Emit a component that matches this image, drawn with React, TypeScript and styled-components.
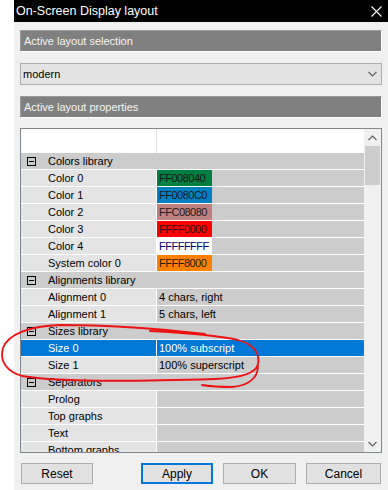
import React from 'react';
import styled, { createGlobalStyle } from 'styled-components';

const GlobalStyle = createGlobalStyle`
  html, body {
    margin: 0;
    padding: 0;
    background: #ffffff;
  }
  body {
    font-family: 'Liberation Sans', Arial, sans-serif;
  }
`;

const Page = styled.div`
  position: relative;
  display: flex;
  width: 388px;
  height: 490px;
  overflow: hidden;
`;

const Gutter = styled.div`
  width: 14px;
  flex-shrink: 0;
  background: #ffffff;
`;

const Dialog = styled.div`
  flex: 1;
  display: flex;
  flex-direction: column;
  background: #f0f0f0;
`;

const TitleBar = styled.div`
  height: 22px;
  background: #000000;
  color: #ffffff;
  display: flex;
  align-items: center;
  justify-content: space-between;
  padding: 0 6px 0 2px;
  font-size: 12.5px;
  flex-shrink: 0;
`;

const Body = styled.div`
  display: flex;
  flex-direction: column;
  padding: 8px 6px 0 6px;
`;

const SectionHeader = styled.div<{ $mt?: number }>`
  height: 20px;
  margin-top: ${(p) => p.$mt ?? 0}px;
  background: #808080;
  border: 1px solid;
  border-color: #9a9a9a #ffffff #ffffff #9a9a9a;
  color: #f4f4f4;
  font-size: 11px;
  display: flex;
  align-items: center;
  padding-left: 3px;
`;

const Combo = styled.div`
  height: 20px;
  margin-top: 11px;
  background: #e3e3e3;
  border: 1px solid #adadad;
  display: flex;
  align-items: center;
  justify-content: space-between;
  padding: 0 4px 0 2px;
  font-size: 11px;
  color: #000;
`;

const Grid = styled.div`
  margin-top: 10px;
  height: 323px;
  border: 1px solid #828790;
  background: #ffffff;
  display: flex;
  overflow: hidden;
`;

const GridMain = styled.div`
  flex: 1;
  display: flex;
  flex-direction: column;
  overflow: hidden;
`;

const HeaderRow = styled.div`
  height: 24px;
  flex-shrink: 0;
  display: grid;
  grid-template-columns: 136px 1fr;
`;

const HeaderCell = styled.div`
  border-right: 1px solid #e4e4e4;
`;

const Row = styled.div<{ $selected?: boolean }>`
  height: 16px;
  flex-shrink: 0;
  border-bottom: 1px solid #ffffff;
  display: grid;
  grid-template-columns: 136px 1fr;
  font-size: 11px;
  color: ${(p) => (p.$selected ? '#ffffff' : '#000000')};
  background: ${(p) => (p.$selected ? '#0078d7' : '#cccccc')};
`;

const Label = styled.div<{ $kind: 'cat' | 'item'; $selected?: boolean }>`
  display: flex;
  align-items: center;
  padding-left: ${(p) => (p.$kind === 'cat' ? 6 : 27)}px;
  background: ${(p) => (p.$selected ? '#0078d7' : p.$kind === 'cat' ? '#cccccc' : '#e4e4e4')};
  border-right: 1px solid ${(p) => (p.$kind === 'cat' ? 'transparent' : '#ffffff')};
  white-space: nowrap;
`;

const Value = styled.div`
  display: flex;
  align-items: center;
  white-space: nowrap;
`;

const Plain = styled.span`
  padding-left: 2px;
`;

const Swatch = styled.span<{ $bg: string; $fg?: string }>`
  width: 53px;
  height: 16px;
  overflow: hidden;
  background: ${(p) => p.$bg};
  color: ${(p) => p.$fg ?? '#1a1a1a'};
  display: flex;
  align-items: center;
  padding-left: 2px;
  letter-spacing: -0.5px;
`;

const Toggle = styled.span`
  width: 9px;
  height: 9px;
  box-sizing: border-box;
  border: 1px solid #000;
  margin-right: 12px;
  position: relative;
  &::after {
    content: '';
    position: absolute;
    left: 1px;
    right: 1px;
    top: 3px;
    height: 1px;
    background: #000;
  }
`;

const ScrollBar = styled.div`
  width: 17px;
  flex-shrink: 0;
  background: #f0f0f0;
  display: flex;
  flex-direction: column;
  align-items: center;
`;

const ScrollArrow = styled.div`
  height: 17px;
  width: 17px;
  display: flex;
  align-items: center;
  justify-content: center;
  flex-shrink: 0;
`;

const Thumb = styled.div`
  width: 15px;
  height: 39px;
  background: #cdcdcd;
`;

const Track = styled.div`
  flex: 1;
`;

const ButtonBar = styled.div`
  display: flex;
  margin-top: 10px;
  padding: 0 6px 0 7px;
`;

const Button = styled.div<{ $w: number; $focus?: boolean; $ml?: number }>`
  width: ${(p) => p.$w}px;
  height: 21px;
  box-sizing: border-box;
  margin-left: ${(p) => p.$ml ?? 0}px;
  background: #e1e1e1;
  border: ${(p) => (p.$focus ? '2px solid #0078d7' : '1px solid #adadad')};
  display: flex;
  align-items: center;
  justify-content: center;
  font-size: 12px;
  color: #000;
`;

const Annotation = styled.svg`
  position: absolute;
  left: 0;
  top: 0;
  pointer-events: none;
`;

type Item = {
  kind: 'cat' | 'item';
  label: string;
  value?: string;
  swatch?: string;
  fg?: string;
  selected?: boolean;
};

const rows: Item[] = [
  { kind: 'cat', label: 'Colors library' },
  { kind: 'item', label: 'Color 0', value: 'FF008040', swatch: '#008040' },
  { kind: 'item', label: 'Color 1', value: 'FF0080C0', swatch: '#0080c0' },
  { kind: 'item', label: 'Color 2', value: 'FFC08080', swatch: '#c08080' },
  { kind: 'item', label: 'Color 3', value: 'FFFF0000', swatch: '#ff0000' },
  { kind: 'item', label: 'Color 4', value: 'FFFFFFFF', swatch: '#ffffff', fg: '#000060' },
  { kind: 'item', label: 'System color 0', value: 'FFFF8000', swatch: '#ff8000' },
  { kind: 'cat', label: 'Alignments library' },
  { kind: 'item', label: 'Alignment 0', value: '4 chars, right' },
  { kind: 'item', label: 'Alignment 1', value: '5 chars, left' },
  { kind: 'cat', label: 'Sizes library' },
  { kind: 'item', label: 'Size 0', value: '100% subscript', selected: true },
  { kind: 'item', label: 'Size 1', value: '100% superscript' },
  { kind: 'cat', label: 'Separators' },
  { kind: 'item', label: 'Prolog' },
  { kind: 'item', label: 'Top graphs' },
  { kind: 'item', label: 'Text' },
  { kind: 'item', label: 'Bottom graphs' },
];

const Chevron: React.FC<{ up?: boolean; color?: string }> = ({ up, color = '#606060' }) => (
  <svg width="9" height="6" viewBox="0 0 9 6">
    <path
      d={up ? 'M0.5 5 L4.5 1 L8.5 5' : 'M0.5 1 L4.5 5 L8.5 1'}
      fill="none"
      stroke={color}
      strokeWidth="1.2"
    />
  </svg>
);

const PropertyRow: React.FC<{ item: Item }> = ({ item }) => (
  <Row $selected={item.selected}>
    <Label $kind={item.kind} $selected={item.selected}>
      {item.kind === 'cat' && <Toggle />}
      {item.label}
    </Label>
    <Value>
      {item.swatch ? (
        <Swatch $bg={item.swatch} $fg={item.fg}>
          {item.value}
        </Swatch>
      ) : (
        item.value && <Plain>{item.value}</Plain>
      )}
    </Value>
  </Row>
);

export default function App() {
  return (
    <>
      <GlobalStyle />
      <Page>
        <Gutter />
        <Dialog>
          <TitleBar>
            <span>On-Screen Display layout</span>
            <svg width="11" height="11" viewBox="0 0 11 11">
              <path d="M0.5 0.5 L10.5 10.5 M10.5 0.5 L0.5 10.5" stroke="#fff" strokeWidth="1.1" />
            </svg>
          </TitleBar>
          <Body>
            <SectionHeader>Active layout selection</SectionHeader>
            <Combo>
              <span>modern</span>
              <Chevron />
            </Combo>
            <SectionHeader $mt={11}>Active layout properties</SectionHeader>
            <Grid>
              <GridMain>
                <HeaderRow>
                  <HeaderCell />
                  <div />
                </HeaderRow>
                {rows.map((r) => (
                  <PropertyRow key={r.label} item={r} />
                ))}
              </GridMain>
              <ScrollBar>
                <ScrollArrow>
                  <Chevron up />
                </ScrollArrow>
                <Thumb />
                <Track />
                <ScrollArrow>
                  <Chevron />
                </ScrollArrow>
              </ScrollBar>
            </Grid>
          </Body>
          <ButtonBar>
            <Button $w={72}>Reset</Button>
            <Button $w={72} $ml={48} $focus>
              Apply
            </Button>
            <Button $w={73} $ml={10}>
              OK
            </Button>
            <Button $w={75} $ml={10}>
              Cancel
            </Button>
          </ButtonBar>
        </Dialog>
        <Annotation width="388" height="490" viewBox="0 0 388 490">
          <path
            d="M205 334 C170 330 120 325 60 325 C30 326 8 334 3 348 C-1 362 8 372 22 376 C60 383 150 381 215 379 C240 378 256 374 258 364 C260 352 252 344 238 340 C220 336 190 333 150 331 M258 366 C258 378 248 386 232 387 C220 387 208 386 202 385"
            fill="none"
            stroke="#ee1111"
            strokeWidth="1.8"
            strokeLinecap="round"
          />
        </Annotation>
      </Page>
    </>
  );
}
